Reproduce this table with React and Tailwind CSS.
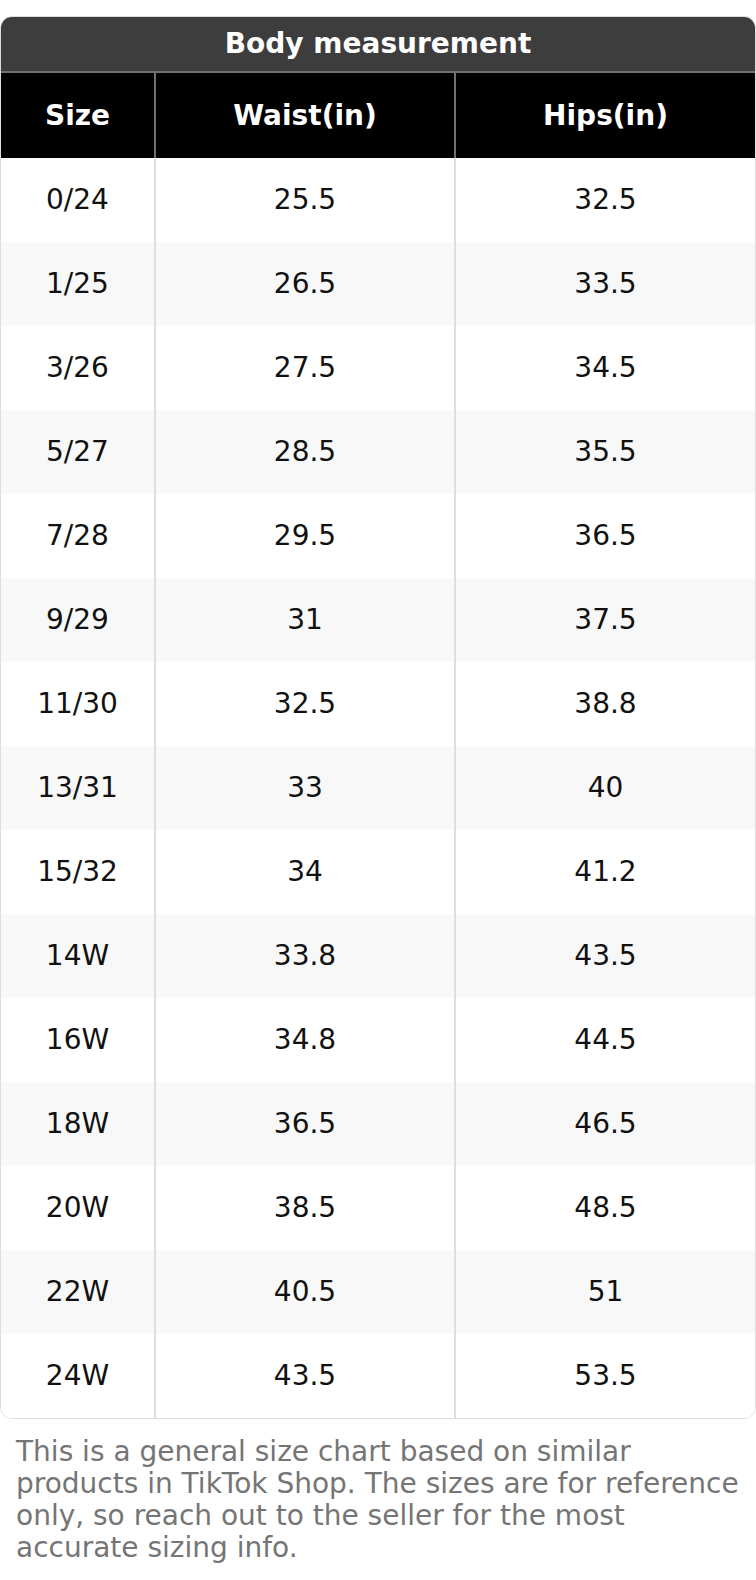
const rows = [
  ["0/24", "25.5", "32.5"],
  ["1/25", "26.5", "33.5"],
  ["3/26", "27.5", "34.5"],
  ["5/27", "28.5", "35.5"],
  ["7/28", "29.5", "36.5"],
  ["9/29", "31", "37.5"],
  ["11/30", "32.5", "38.8"],
  ["13/31", "33", "40"],
  ["15/32", "34", "41.2"],
  ["14W", "33.8", "43.5"],
  ["16W", "34.8", "44.5"],
  ["18W", "36.5", "46.5"],
  ["20W", "38.5", "48.5"],
  ["22W", "40.5", "51"],
  ["24W", "43.5", "53.5"],
];

export default function App() {
  return (
    <div className="bg-white w-[756px] min-h-[1580px] pt-4 pb-4 font-['DejaVu_Sans',sans-serif]">
      <div className="rounded-[12px] border border-[#dddddd] overflow-hidden">
        <div className="h-[56px] bg-[#3d3d3d] border-b-2 border-[#707070] flex items-center justify-center text-white font-bold text-[28px]">
          Body measurement
        </div>
        <div className="grid grid-cols-[155px_300px_1fr] bg-black text-white font-bold text-[28px] h-[85px]">
          <div className="flex items-center justify-center border-r-2 border-[#707070]">Size</div>
          <div className="flex items-center justify-center border-r-2 border-[#707070]">Waist(in)</div>
          <div className="flex items-center justify-center">Hips(in)</div>
        </div>
        {rows.map((r, i) => (
          <div
            key={r[0]}
            className={
              "grid grid-cols-[155px_300px_1fr] h-[84px] text-[28px] text-[#111111] " +
              (i % 2 === 1 ? "bg-[#f8f8f8]" : "bg-white")
            }
          >
            <div className="flex items-center justify-center border-r-2 border-[#dedede]">{r[0]}</div>
            <div className="flex items-center justify-center border-r-2 border-[#dedede]">{r[1]}</div>
            <div className="flex items-center justify-center">{r[2]}</div>
          </div>
        ))}
      </div>
      <p className="pl-4 pr-1 pt-[17px] text-[28px] leading-[32px] text-[#757575]">
        This is a general size chart based on similar products in TikTok Shop. The sizes are for reference only, so reach out to the seller for the most accurate sizing info.
      </p>
    </div>
  );
}
